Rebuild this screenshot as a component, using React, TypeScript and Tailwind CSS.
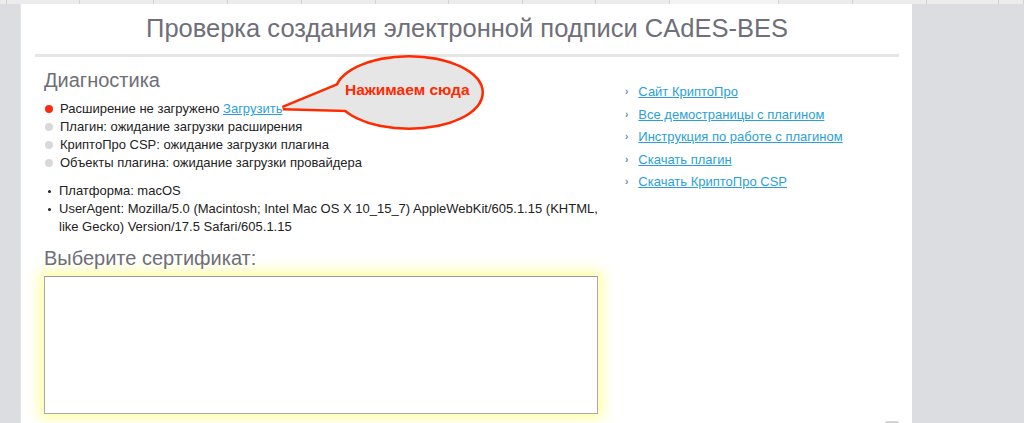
import React from 'react';

const tabs = [7, 73, 74, 74, 74, 74, 73, 74, 73, 74, 109, 74, 74, 72, 25];

const diag = [
  { color: 'bg-[#ff2a12]', text: 'Расширение не загружено', link: 'Загрузить' },
  { color: 'bg-[#d9d9d9]', text: 'Плагин: ожидание загрузки расширения' },
  { color: 'bg-[#d9d9d9]', text: 'КриптоПро CSP: ожидание загрузки плагина' },
  { color: 'bg-[#d9d9d9]', text: 'Объекты плагина: ожидание загрузки провайдера' },
];

const links = [
  'Сайт КриптоПро',
  'Все демостраницы с плагином',
  'Инструкция по работе с плагином',
  'Скачать плагин',
  'Скачать КриптоПро CSP',
];

const Callout = () => (
  <svg
    className="absolute left-[276px] top-[50px]"
    width="216"
    height="86"
    viewBox="276 50 216 86"
  >
    {/* outline first, fill on top so the tail and ellipse merge */}
    <polygon points="346,82 283,108 354,110" fill="none" stroke="#ff2a00" strokeWidth="5" strokeLinejoin="miter" />
    <ellipse cx="409" cy="92.5" rx="72.5" ry="35" fill="none" stroke="#ff2a00" strokeWidth="5" />
    <polygon points="346,82 283,108 354,110" fill="#e6e6e6" />
    <ellipse cx="409" cy="92.5" rx="72.5" ry="35" fill="#e6e6e6" />
  </svg>
);

export default function App() {
  return (
    <div className="relative w-[1024px] h-[423px] overflow-hidden bg-[#dcdde1] font-['Liberation_Sans',Arial,sans-serif]">
      <div className="flex h-[4px] bg-[#ececec]">
        {tabs.map((w, i) => (
          <div
            key={i}
            style={{ width: w }}
            className={`h-full border-r border-[#d2d2d2] ${i === 10 ? 'bg-[#f4f4f4]' : ''}`}
          />
        ))}
      </div>

      <div className="flex h-[419px]">
        <div className="w-[21px] shrink-0 border-r border-[#e4e5e8]" />

        <main className="relative w-[891px] shrink-0 bg-white pt-[9px] pl-[14px] pr-[13px]">
          <h1 className="text-center text-[25.5px] leading-[30px] text-[#6e6f78]">
            Проверка создания электронной подписи CAdES-BES
          </h1>
          <div className="mt-[11px] h-[3px] bg-[#e6e6e6]" />

          <div className="flex pl-[9px]">
            <section className="w-[556px] shrink-0">
              <h2 className="mt-[11px] text-[20px] leading-[24px] text-[#6e6f78]">Диагностика</h2>

              <ul className="mt-[8px] text-[13px] leading-[18px] text-[#222]">
                {diag.map((d) => (
                  <li key={d.text} className="flex items-center">
                    <span className={`ml-[1px] mr-[7px] h-[8px] w-[8px] rounded-full ${d.color}`} />
                    <span>
                      {d.text}
                      {d.link && (
                        <>
                          {' '}
                          <a className="text-[#2a9fd8] underline">{d.link}</a>
                        </>
                      )}
                    </span>
                  </li>
                ))}
              </ul>

              <ul className="mt-[10px] text-[13px] leading-[18px] text-[#222]">
                <li className="flex">
                  <span className="mt-[8px] ml-[4px] mr-[8px] h-[3px] w-[3px] shrink-0 rounded-full bg-[#222]" />
                  <span>Платформа: macOS</span>
                </li>
                <li className="flex">
                  <span className="mt-[8px] ml-[4px] mr-[8px] h-[3px] w-[3px] shrink-0 rounded-full bg-[#222]" />
                  <span>
                    UserAgent: Mozilla/5.0 (Macintosh; Intel Mac OS X 10_15_7) AppleWebKit/605.1.15 (KHTML, like
                    Gecko) Version/17.5 Safari/605.1.15
                  </span>
                </li>
              </ul>

              <h2 className="mt-[10px] text-[20px] leading-[24px] text-[#6e6f78]">Выберите сертификат:</h2>
              <div className="mt-[6px] h-[138px] w-[554px] border border-[#a8a8a8] border-t-[#9a9a9a] bg-white shadow-[0_0_12px_5px_rgba(255,255,140,0.75)]" />
            </section>

            <nav className="ml-[25px] mt-[24px]">
              <ul className="text-[13px] leading-[22.5px]">
                {links.map((l) => (
                  <li key={l} className="flex items-center">
                    <span className="mr-[10px] text-[10px] font-bold text-[#5b8fb5]">›</span>
                    <a className="text-[#2a9fd8] underline">{l}</a>
                  </li>
                ))}
              </ul>
            </nav>
          </div>

          <div className="absolute left-[864px] top-[417px] h-[6px] w-[14px] rounded-[2px] bg-[#d4d4d4]" />
        </main>

        <div className="flex-1" />
      </div>

      <Callout />
      <span className="absolute left-[345px] top-[80px] text-[15.5px] leading-[20px] font-bold text-[#ff2a00]">
        Нажимаем сюда
      </span>
    </div>
  );
}
